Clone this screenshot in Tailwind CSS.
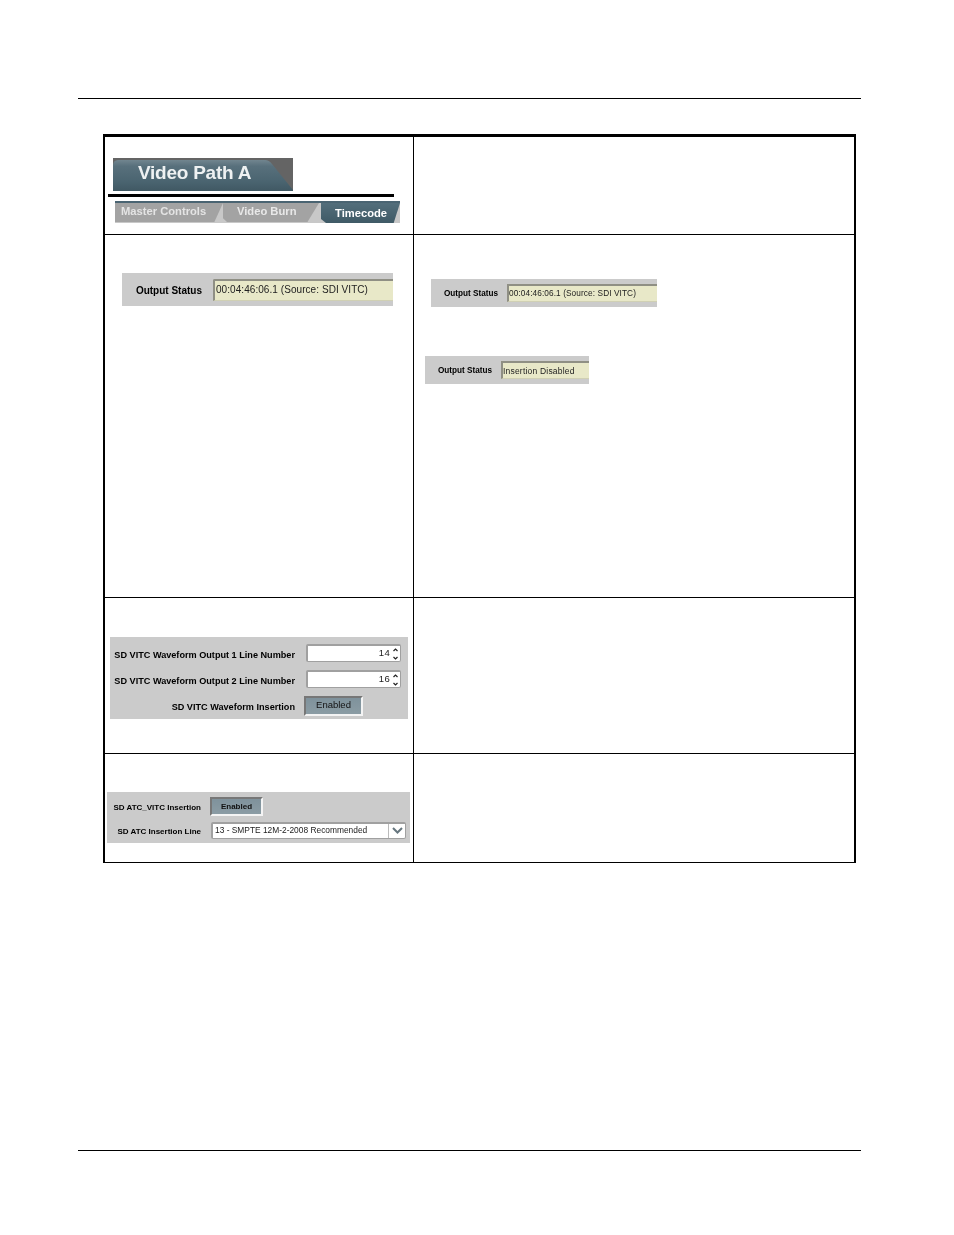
<!DOCTYPE html>
<html>
<head>
<meta charset="UTF-8" />
<title>Timecode</title>
<script src="https://cdn.jsdelivr.net/npm/@tailwindcss/browser@4"></script>
</head>
<body class="bg-white font-['Liberation_Sans',Arial,sans-serif] text-black">
<div class="w-[954px] h-[1235px] flex flex-col overflow-hidden">
	<div class="mt-[98px] ml-[78px] w-[783px] h-px shrink-0 bg-black"></div>

	<!-- table -->
	<div class="mt-[35px] ml-[103px] w-[753px] h-[729px] shrink-0 border-t-[3px] border-l-2 border-r-2 border-b border-black flex flex-col">

		<!-- row 1 -->
		<div class="h-[98px] shrink-0 flex border-b border-black">
			<div class="w-[309px] shrink-0 border-r border-black pt-[21px]">
				<div class="ml-[8px] w-[180px] h-[33px] bg-[#646464] relative">
					<svg class="absolute inset-0" width="180" height="33" viewBox="0 0 180 33">
						<defs>
							<linearGradient id="g1" x1="0" y1="0" x2="0" y2="1">
								<stop offset="0" stop-color="#71858f" />
								<stop offset="0.2" stop-color="#58707c" />
								<stop offset="0.7" stop-color="#4a6470" />
								<stop offset="1" stop-color="#405863" />
							</linearGradient>
						</defs>
						<path d="M5 2 L152 2 Q156 2 159 6 L180 32 L180 33 L0 33 L0 8 Q0 2 5 2 Z" fill="url(#g1)" />
					</svg>
					<div class="relative pl-[25px] text-[19px] leading-[30px] font-bold tracking-[-0.25px] text-[#eef1f2] blur-[0.35px]">Video Path A</div>
				</div>
				<div class="ml-[3px] mt-[3px] w-[286px] h-[3px] bg-black"></div>
				<div class="ml-[10px] mt-[4px] w-[285px] h-[22px] bg-[#c8c8c8] border-t-2 border-[#4a6472] flex text-[11.2px] font-bold leading-[17px] blur-[0.35px]">
					<div class="w-[108px] h-[19px] bg-[#a3a3a3] text-[#e4e4e4] pl-[6px] [clip-path:polygon(0_0,100%_0,92%_100%,0_100%)]">Master Controls</div>
					<div class="w-[96px] h-[19px] bg-[#a3a3a3] text-[#e8e8e8] pl-[14px] [clip-path:polygon(0_0,100%_0,88%_100%,4px_100%,0_80%)]">Video Burn</div>
					<div class="ml-[2px] w-[79px] h-[20px] bg-gradient-to-b from-[#536e7b] to-[#3f5a66] text-white pl-[14px] pt-[2px] [clip-path:polygon(0_0,100%_0,92%_100%,5px_100%,0_80%)]">Timecode</div>
				</div>
			</div>
			<div class="flex-1"></div>
		</div>

		<!-- row 2 -->
		<div class="h-[363px] shrink-0 flex border-b border-black">
			<div class="w-[309px] shrink-0 border-r border-black pt-[38px] pl-[17px]">
				<div class="w-[271px] h-[33px] bg-[#cbcbcb] flex items-center">
					<div class="w-[91px] shrink-0 pr-[11px] pt-[2px] text-right text-[10px] font-bold whitespace-nowrap blur-[0.3px]">Output Status</div>
					<div class="flex-1 h-[22px] bg-[#e8e8c8] border-l-2 border-t-2 border-b border-l-[#8f8f84] border-t-[#8f8f84] border-b-[#d0d0b4] rounded-tl-[2px] text-[10px] leading-[18px] pl-[1px] tracking-[0.06px] whitespace-nowrap text-[#222] blur-[0.3px]">00:04:46:06.1 (Source: SDI VITC)</div>
				</div>
			</div>
			<div class="flex-1 flex flex-col">
				<div class="ml-[17px] mt-[44px] w-[226px] h-[28px] bg-[#cbcbcb] flex items-center">
					<div class="w-[75px] shrink-0 pr-[8px] pt-[2px] text-right text-[8.2px] font-bold whitespace-nowrap blur-[0.3px]">Output Status</div>
					<div class="ml-px flex-1 h-[18px] bg-[#e8e8c8] border-l-2 border-t-2 border-b border-l-[#8f8f84] border-t-[#8f8f84] border-b-[#d0d0b4] text-[8.25px] leading-[16px] tracking-[0.1px] whitespace-nowrap text-[#222] blur-[0.3px]">00:04:46:06.1 (Source: SDI VITC)</div>
				</div>
				<div class="ml-[11px] mt-[49px] w-[164px] h-[28px] bg-[#cbcbcb] flex items-center">
					<div class="w-[75px] shrink-0 pr-[8px] pt-[2px] text-right text-[8.2px] font-bold whitespace-nowrap blur-[0.3px]">Output Status</div>
					<div class="ml-px flex-1 h-[18px] bg-[#e8e8c8] border-l-2 border-t-2 border-b border-l-[#8f8f84] border-t-[#8f8f84] border-b-[#d0d0b4] text-[8.5px] leading-[16px] tracking-[0.2px] whitespace-nowrap text-[#222] blur-[0.3px]">Insertion Disabled</div>
				</div>
			</div>
		</div>

		<!-- row 3 -->
		<div class="h-[156px] shrink-0 flex border-b border-black">
			<div class="w-[309px] shrink-0 border-r border-black pt-[39px] pl-[5px]">
				<div class="w-[298px] h-[82px] bg-[#cbcbcb] pt-[7px] flex flex-col gap-[8px]">
					<div class="h-[18px] flex items-center">
						<div class="w-[185px] shrink-0 pt-[5px] text-right text-[9.15px] font-bold whitespace-nowrap blur-[0.3px]">SD VITC Waveform Output 1 Line Number</div>
						<div class="ml-[11px] w-[95px] h-[18px] bg-white border border-[#a0a0a0] border-l-2 border-t-2 rounded-[2px] flex items-center justify-end text-[9.5px] tracking-[0.3px] text-[#222] blur-[0.2px]">
							<span>14</span>
							<svg class="ml-[2px] mr-[1px]" width="7" height="14" viewBox="0 0 7 14" fill="none" stroke="#222" stroke-width="1.2"><path d="M1.5 4 L3.5 2 L5.5 4" /><path d="M1.5 10 L3.5 12 L5.5 10" /></svg>
						</div>
					</div>
					<div class="h-[18px] flex items-center">
						<div class="w-[185px] shrink-0 pt-[5px] text-right text-[9.15px] font-bold whitespace-nowrap blur-[0.3px]">SD VITC Waveform Output 2 Line Number</div>
						<div class="ml-[11px] w-[95px] h-[18px] bg-white border border-[#a0a0a0] border-l-2 border-t-2 rounded-[2px] flex items-center justify-end text-[9.5px] tracking-[0.3px] text-[#222] blur-[0.2px]">
							<span>16</span>
							<svg class="ml-[2px] mr-[1px]" width="7" height="14" viewBox="0 0 7 14" fill="none" stroke="#222" stroke-width="1.2"><path d="M1.5 4 L3.5 2 L5.5 4" /><path d="M1.5 10 L3.5 12 L5.5 10" /></svg>
						</div>
					</div>
					<div class="h-[20px] flex items-center">
						<div class="w-[185px] shrink-0 pt-[3px] text-right text-[9.15px] font-bold whitespace-nowrap blur-[0.3px]">SD VITC Waveform Insertion</div>
						<div class="ml-[9px] w-[59px] h-[20px] bg-gradient-to-b from-[#7f929c] to-[#8b9ca4] border-2 border-t-[#777] border-l-[#777] border-r-[#f4f4f4] border-b-[#f4f4f4] text-center text-[9.5px] leading-[14px] text-[#111] blur-[0.2px]">Enabled</div>
					</div>
				</div>
			</div>
			<div class="flex-1"></div>
		</div>

		<!-- row 4 -->
		<div class="flex-1 flex">
			<div class="w-[309px] shrink-0 border-r border-black pt-[38px] pl-[2px]">
				<div class="w-[303px] h-[51px] bg-[#cbcbcb] pt-[5px] flex flex-col gap-[5px]">
					<div class="h-[19px] flex items-center">
						<div class="w-[94px] shrink-0 pt-[2px] text-right text-[8px] font-bold whitespace-nowrap blur-[0.3px]">SD ATC_VITC Insertion</div>
						<div class="ml-[9px] w-[53px] h-[19px] bg-gradient-to-b from-[#7f929c] to-[#8b9ca4] border-2 border-t-[#777] border-l-[#777] border-r-[#f4f4f4] border-b-[#f4f4f4] text-center text-[8px] leading-[15px] font-bold text-[#111] blur-[0.2px]">Enabled</div>
					</div>
					<div class="h-[18px] flex items-center">
						<div class="w-[94px] shrink-0 pt-[4px] text-right text-[8px] font-bold whitespace-nowrap blur-[0.3px]">SD ATC Insertion Line</div>
						<div class="ml-[10px] w-[195px] h-[17px] bg-white border border-[#a0a0a0] border-l-2 border-t-2 rounded-[2px] flex items-center text-[8.4px] text-[#222]">
							<span class="flex-1 pl-[2px] whitespace-nowrap blur-[0.25px]">13 - SMPTE 12M-2-2008 Recommended</span>
							<span class="w-[17px] h-full border-l border-[#bbb] flex items-center justify-center">
								<svg width="11" height="7" viewBox="0 0 11 7" fill="none" stroke="#66767e" stroke-width="2"><path d="M1 1 L5.5 5.5 L10 1" /></svg>
							</span>
						</div>
					</div>
				</div>
			</div>
			<div class="flex-1"></div>
		</div>
	</div>

	<div class="mt-[287px] ml-[78px] w-[783px] h-px shrink-0 bg-black"></div>
</div>
</body>
</html>
